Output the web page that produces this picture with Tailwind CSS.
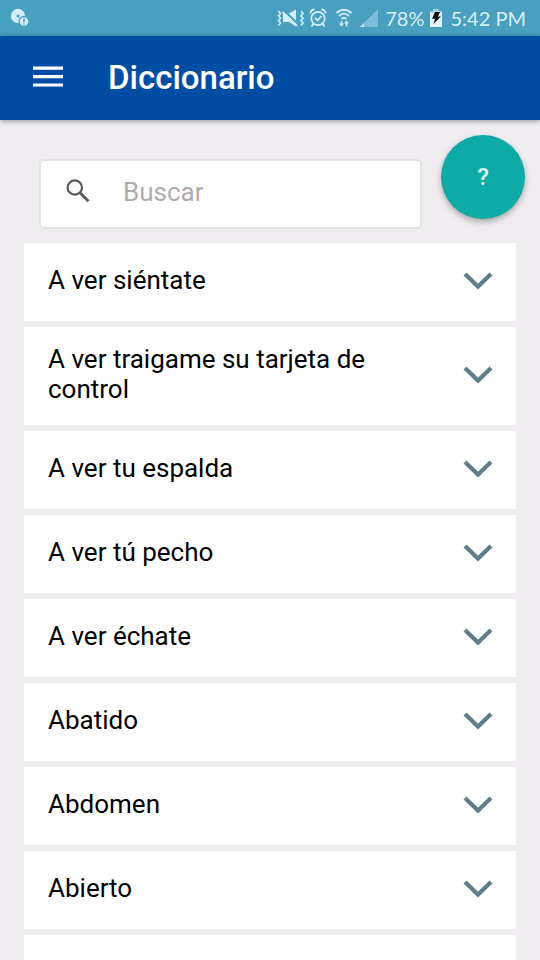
<!DOCTYPE html>
<html lang="es">
<head>
<meta charset="utf-8">
<meta name="viewport" content="width=device-width, initial-scale=1">
<title>Diccionario</title>
<script src="https://cdn.jsdelivr.net/npm/@tailwindcss/browser@4"></script>
</head>
<body class="flex h-screen flex-col overflow-hidden bg-[#efedf0] font-['Roboto',sans-serif] text-black">
<svg class="hidden" aria-hidden="true">
  <symbol id="chevron" viewBox="0 0 30 20"><path d="M2 4 15 16.500 28 4" fill="none" stroke="#5f7d8a" stroke-width="4.200"/></symbol>
</svg>

<div class="flex h-9 shrink-0 items-center bg-[#489fbf] pr-[14px] pl-[10px] text-[#d9f1fb]">
  <svg class="h-5 w-5" viewBox="0 0 20 20" aria-label="Aviso">
    <circle cx="8" cy="8" r="7.200" fill="#d3edf9"/>
    <circle cx="8" cy="8" r="1.500" fill="#489fbf"/>
    <circle cx="14" cy="13.500" r="5" fill="#d3edf9" stroke="#489fbf" stroke-width="1.300"/>
    <path d="M14 10.500v3.700M14 15.300v1.500" stroke="#489fbf" stroke-width="1.500"/>
  </svg>
  <div class="ml-auto flex items-center font-['Lato',sans-serif] text-[20px] leading-6">
    <svg class="h-5 w-7" viewBox="0 0 28 20" fill="none" stroke="#d3edf9" stroke-width="1.600" aria-label="Vibración">
      <path d="M6 5.500h6l7-4v17L12 14H6z" fill="#d3edf9" stroke="none"/>
      <path d="M6.500 2 21 16" stroke="#489fbf" stroke-width="2.200"/>
      <path d="M5.500 3.800 20 17.800" stroke-width="1.800"/>
      <path d="M1.500 3l2 2.500-2 2.300 2 2.500-2 2.300 2 2.400-2 2.500M24 3l2 2.500-2 2.300 2 2.500-2 2.300 2 2.400-2 2.500"/>
    </svg>
    <svg class="ml-1 h-5 w-[18px]" viewBox="0 0 18 20" fill="none" stroke="#d3edf9" stroke-width="1.800" aria-label="Alarma">
      <circle cx="9" cy="10.500" r="6.700"/>
      <path d="M6 10l2.500 2.500L12.500 8M1.500 5.500C1.500 3 3 1.500 5.500 1.500M16.500 5.500c0-2.500-1.500-4-4-4M4.500 15.500l-2 3M13.500 15.500l2 3"/>
    </svg>
    <svg class="ml-2 h-5 w-[18px]" viewBox="0 0 18 20" fill="none" stroke="#d3edf9" stroke-width="2" aria-label="Wifi">
      <path d="M1.500 5c4.500-4.500 10.500-4.500 15 0M4 8c3-3 7-3 10 0M6.500 11c1.500-1.500 3.500-1.500 5 0"/>
      <path d="M6.500 13v4M11.500 14.500v4" stroke-width="1.700"/>
      <path d="M4 15.500h5L6.500 18.800zM9 15.500h5L11.500 12.500z" fill="#d3edf9" stroke="none"/>
    </svg>
    <svg class="ml-[7px] h-5 w-[18px]" viewBox="0 0 18 20" aria-label="Señal">
      <path d="M0 19 18 1v18z" fill="#7fbcdc"/><path d="M0 19l4-4v4z" fill="#d3edf9"/>
    </svg>
    <span class="ml-[7px]">78%</span>
    <svg class="ml-[5px] h-[18px] w-3" viewBox="0 0 12 18" aria-label="Cargando">
      <path d="M3 0h6v2h3v16H0V2h3z" fill="#a8d3e6"/><path d="M0 4h12v14H0z" fill="#e4f3fa"/>
      <path d="M5 3h5L8 7.500h3L3.500 15 5 9.800H2z" fill="#101418"/>
    </svg>
    <span class="ml-[9px]">5:42 PM</span>
  </div>
</div>

<header class="z-10 flex h-[84px] shrink-0 items-center bg-[#014da3] pl-[33px] text-white shadow-[0_1px_5px_rgba(0,0,0,0.4)]">
  <button type="button" aria-label="Abrir menú" class="flex h-10 w-[30px] items-center">
    <svg class="h-6 w-[30px]" viewBox="0 0 30 24" stroke="#fff" stroke-width="3.200"><path d="M0 2.200h30M0 10.600h30M0 19h30"/></svg>
  </button>
  <h1 class="ml-[45px] text-[33px] leading-10 font-medium">Diccionario</h1>
</header>

<main class="min-h-0 flex-1 overflow-hidden pt-[15px]">
  <div class="flex items-start gap-[19px] pr-[15px] pl-[39px]">
    <form role="search" class="mt-6 flex h-[70px] min-w-0 flex-1 items-center rounded-[5px] border-2 border-[#e5e2e6] bg-white pr-4 pb-1 pl-6">
      <label for="q" aria-label="Buscar" class="shrink-0">
        <svg class="h-[26px] w-[26px]" viewBox="0 0 26 26" fill="none" stroke="#5b5a5b"><circle cx="9.800" cy="8.500" r="7.200" stroke-width="2.200"/><path d="M14.800 13.500l8.700 8.700" stroke-width="2.900"/></svg>
      </label>
      <input id="q" type="text" placeholder="Buscar" class="ml-8 h-10 min-w-0 flex-1 bg-transparent text-[26px] outline-none placeholder:text-[#aeabae]">
    </form>
    <button type="button" aria-label="Ayuda" class="flex h-[84px] w-[84px] shrink-0 items-center justify-center rounded-full bg-[#0daaa6] text-[24px] leading-7 font-medium text-[#d8fbf6] shadow-[0_3px_6px_rgba(0,0,0,0.3)]">?</button>
  </div>

  <ul class="mt-[14px] flex flex-col gap-[6px] pr-6 pl-6 text-[26px] leading-[30px]">
    <li><button type="button" aria-expanded="false" class="flex min-h-[78px] w-full items-center bg-white pt-[17px] pr-[23px] pb-[21px] pl-6 text-left"><span class="max-w-[350px] flex-1">A ver siéntate</span><svg class="ml-auto h-5 w-[30px] shrink-0"><use href="#chevron"/></svg></button></li>
    <li><button type="button" aria-expanded="false" class="flex min-h-[78px] w-full items-center bg-white pt-[17px] pr-[23px] pb-[21px] pl-6 text-left"><span class="max-w-[350px] flex-1">A ver traigame su tarjeta de control</span><svg class="ml-auto h-5 w-[30px] shrink-0"><use href="#chevron"/></svg></button></li>
    <li><button type="button" aria-expanded="false" class="flex min-h-[78px] w-full items-center bg-white pt-[17px] pr-[23px] pb-[21px] pl-6 text-left"><span class="max-w-[350px] flex-1">A ver tu espalda</span><svg class="ml-auto h-5 w-[30px] shrink-0"><use href="#chevron"/></svg></button></li>
    <li><button type="button" aria-expanded="false" class="flex min-h-[78px] w-full items-center bg-white pt-[17px] pr-[23px] pb-[21px] pl-6 text-left"><span class="max-w-[350px] flex-1">A ver tú pecho</span><svg class="ml-auto h-5 w-[30px] shrink-0"><use href="#chevron"/></svg></button></li>
    <li><button type="button" aria-expanded="false" class="flex min-h-[78px] w-full items-center bg-white pt-[17px] pr-[23px] pb-[21px] pl-6 text-left"><span class="max-w-[350px] flex-1">A ver échate</span><svg class="ml-auto h-5 w-[30px] shrink-0"><use href="#chevron"/></svg></button></li>
    <li><button type="button" aria-expanded="false" class="flex min-h-[78px] w-full items-center bg-white pt-[17px] pr-[23px] pb-[21px] pl-6 text-left"><span class="max-w-[350px] flex-1">Abatido</span><svg class="ml-auto h-5 w-[30px] shrink-0"><use href="#chevron"/></svg></button></li>
    <li><button type="button" aria-expanded="false" class="flex min-h-[78px] w-full items-center bg-white pt-[17px] pr-[23px] pb-[21px] pl-6 text-left"><span class="max-w-[350px] flex-1">Abdomen</span><svg class="ml-auto h-5 w-[30px] shrink-0"><use href="#chevron"/></svg></button></li>
    <li><button type="button" aria-expanded="false" class="flex min-h-[78px] w-full items-center bg-white pt-[17px] pr-[23px] pb-[21px] pl-6 text-left"><span class="max-w-[350px] flex-1">Abierto</span><svg class="ml-auto h-5 w-[30px] shrink-0"><use href="#chevron"/></svg></button></li>
    <li class="h-[78px] bg-white"></li>
  </ul>
</main>
</body>
</html>
